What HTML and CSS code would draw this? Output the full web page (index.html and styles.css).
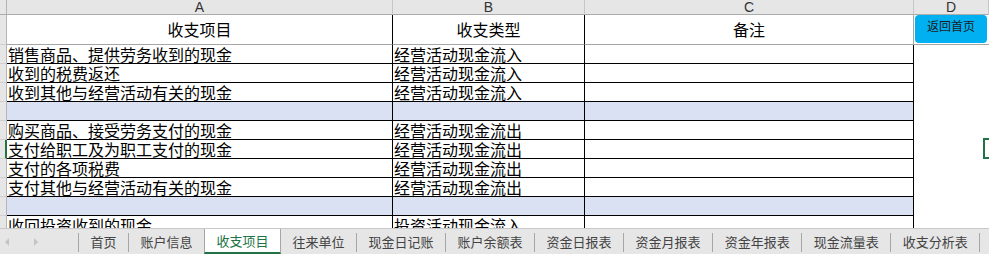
FILE: index.html
```html
<!DOCTYPE html>
<html lang="zh-CN">
<head>
  <meta charset="UTF-8">
  <title>收支项目</title>
  <link rel="stylesheet" href="styles.css">
</head>
<body>
  <div class="sheet">
    <!-- 列标 -->
    <div class="row colhead">
      <div class="cell g"></div>
      <div class="cell a">A</div>
      <div class="cell b">B</div>
      <div class="cell c">C</div>
      <div class="cell d">D</div>
    </div>
    <!-- 表头 -->
    <div class="row head">
      <div class="cell g"></div>
      <div class="cell a">收支项目</div>
      <div class="cell b">收支类型</div>
      <div class="cell c">备注</div>
      <div class="cell d"></div>
    </div>
    <div class="row">
      <div class="cell g"></div>
      <div class="cell a">销售商品、提供劳务收到的现金</div>
      <div class="cell b">经营活动现金流入</div>
      <div class="cell c"></div>
      <div class="cell d"></div>
    </div>
    <div class="row">
      <div class="cell g"></div>
      <div class="cell a">收到的税费返还</div>
      <div class="cell b">经营活动现金流入</div>
      <div class="cell c"></div>
      <div class="cell d"></div>
    </div>
    <div class="row">
      <div class="cell g"></div>
      <div class="cell a">收到其他与经营活动有关的现金</div>
      <div class="cell b">经营活动现金流入</div>
      <div class="cell c"></div>
      <div class="cell d"></div>
    </div>
    <div class="row blank">
      <div class="cell g"></div>
      <div class="cell a"></div>
      <div class="cell b"></div>
      <div class="cell c"></div>
      <div class="cell d"></div>
    </div>
    <div class="row">
      <div class="cell g"></div>
      <div class="cell a">购买商品、接受劳务支付的现金</div>
      <div class="cell b">经营活动现金流出</div>
      <div class="cell c"></div>
      <div class="cell d"></div>
    </div>
    <div class="row">
      <div class="cell g sel"></div>
      <div class="cell a">支付给职工及为职工支付的现金</div>
      <div class="cell b">经营活动现金流出</div>
      <div class="cell c"></div>
      <div class="cell d"></div>
    </div>
    <div class="row">
      <div class="cell g"></div>
      <div class="cell a">支付的各项税费</div>
      <div class="cell b">经营活动现金流出</div>
      <div class="cell c"></div>
      <div class="cell d"></div>
    </div>
    <div class="row">
      <div class="cell g"></div>
      <div class="cell a">支付其他与经营活动有关的现金</div>
      <div class="cell b">经营活动现金流出</div>
      <div class="cell c"></div>
      <div class="cell d"></div>
    </div>
    <div class="row blank">
      <div class="cell g"></div>
      <div class="cell a"></div>
      <div class="cell b"></div>
      <div class="cell c"></div>
      <div class="cell d"></div>
    </div>
    <div class="row">
      <div class="cell g"></div>
      <div class="cell a">收回投资收到的现金</div>
      <div class="cell b">投资活动现金流入</div>
      <div class="cell c"></div>
      <div class="cell d"></div>
    </div>

    <!-- 浮动按钮和选中框 -->
    <button class="home-btn">返回首页</button>
    <div class="selbox"></div>
  </div>

  <div class="tabs">
    <div class="nav">
      <span class="arrow left"></span>
      <span class="arrow right"></span>
    </div>
    <i class="sep"></i>
    <div class="tab">首页</div>
    <i class="sep"></i>
    <div class="tab">账户信息</div>
    <div class="tab active">收支项目</div>
    <div class="tab">往来单位</div>
    <i class="sep"></i>
    <div class="tab">现金日记账</div>
    <i class="sep"></i>
    <div class="tab">账户余额表</div>
    <i class="sep"></i>
    <div class="tab">资金日报表</div>
    <i class="sep"></i>
    <div class="tab">资金月报表</div>
    <i class="sep"></i>
    <div class="tab">资金年报表</div>
    <i class="sep"></i>
    <div class="tab">现金流量表</div>
    <i class="sep"></i>
    <div class="tab">收支分析表</div>
    <i class="sep"></i>
  </div>
</body>
</html>
```

FILE: styles.css
```css
html, body {
  margin: 0;
  padding: 0;
  background: #fff;
}
body {
  width: 989px;
  height: 254px;
  overflow: hidden;
  font-family: "Noto Sans CJK SC", "Noto Sans", sans-serif;
  color: #000;
}
.sheet {
  position: relative;
  height: 228px;
  overflow: hidden;
}
.row {
  display: flex;
}
.cell {
  box-sizing: border-box;
  height: 19px;
  border-right: 1px solid #000;
  border-bottom: 1px solid #000;
  font-size: 16px;
  line-height: 18px;
  white-space: nowrap;
  padding-left: 1px;
}
.g {
  width: 7px;
  padding: 0;
  background: #e6e6e6;
  border-right: 1px solid #b4b4b4;
  border-bottom: 1px solid #cfcfcf;
}
.g.sel {
  border-right: 2px solid #217346;
}
.a { width: 386px; }
.b { width: 192px; }
.c { width: 329px; }
.d {
  width: 75px;
  border-right: none;
  border-bottom: none;
}

/* 列标 */
.colhead .cell {
  height: 15px;
  background: #e6e6e6;
  border-right: 1px solid #c6c6c6;
  border-bottom: 1px solid #ababab;
  font-family: "Liberation Sans", Arial, sans-serif;
  font-size: 14px;
  line-height: 14px;
  color: #333;
  text-align: center;
  padding: 0;
}
.colhead .g {
  border-right: 1px solid #b4b4b4;
}

/* 表头行 */
.head .cell {
  height: 30px;
  line-height: 29px;
  text-align: center;
  border-bottom: 1px solid #a6a6a6;
  padding: 0;
}
.head .c {
  border-right: 1px solid #a6a6a6;
}
.head .g {
  border-bottom: 1px solid #cfcfcf;
}

.blank .a,
.blank .b,
.blank .c {
  background: #d9e1f2;
}

.home-btn {
  position: absolute;
  left: 915px;
  top: 15px;
  width: 72px;
  height: 28px;
  border: none;
  border-radius: 4px;
  background: #00b0f0;
  color: #1a1a1a;
  font-family: "Noto Sans CJK SC", sans-serif;
  font-size: 12px;
  line-height: 16px;
  padding: 3px 0 0;
  display: flex;
  justify-content: center;
  align-items: flex-start;
}
.selbox {
  position: absolute;
  left: 983px;
  top: 138px;
  width: 12px;
  height: 21px;
  box-sizing: border-box;
  border: 2px solid #217346;
}

/* 工作表标签 */
.tabs {
  display: flex;
  align-items: center;
  height: 26px;
  box-sizing: border-box;
  background: #e6e6e6;
  border-top: 1px solid #c8c8c8;
}
.nav {
  width: 78px;
  height: 25px;
  display: flex;
  align-items: center;
}
.arrow {
  width: 0;
  height: 0;
  border-top: 4px solid transparent;
  border-bottom: 4px solid transparent;
}
.arrow.left {
  margin-left: 5px;
  border-right: 4px solid #c4c4c4;
}
.arrow.right {
  margin-left: 25px;
  border-left: 4px solid #c4c4c4;
}
.sep {
  width: 1px;
  height: 19px;
  background: #a6a6a6;
  margin-top: 2px;
}
.tab {
  padding: 0 11.5px;
  height: 25px;
  font-size: 13px;
  line-height: 25px;
  color: #444;
  white-space: nowrap;
}
.tab.active {
  box-sizing: border-box;
  background: #fff;
  color: #217346;
  border-left: 1px solid #a6a6a6;
  border-right: 1px solid #a6a6a6;
  border-bottom: 2px solid #217346;
  line-height: 24px;
}
```
